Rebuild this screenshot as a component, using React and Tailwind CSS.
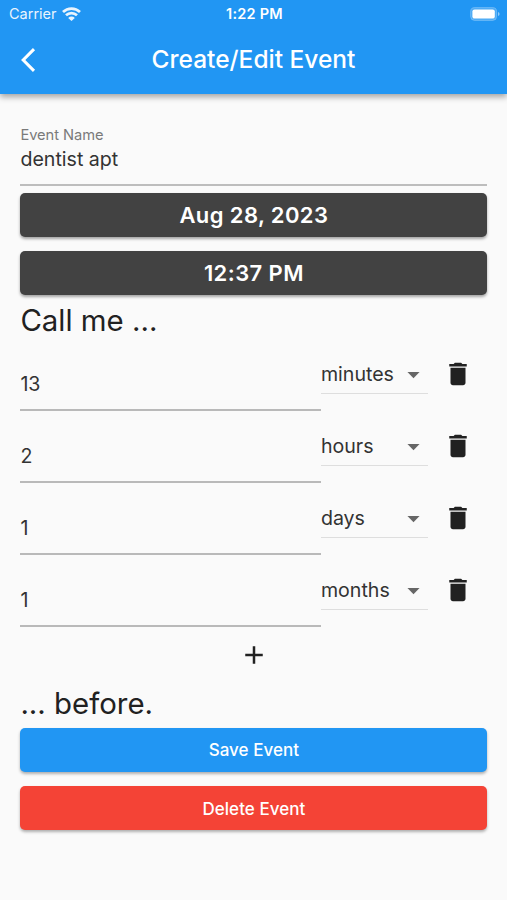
import React, { useState } from "react";

const initialReminders = [
    { id: 1, amount: "13", unit: "minutes" },
    { id: 2, amount: "2", unit: "hours" },
    { id: 3, amount: "1", unit: "days" },
    { id: 4, amount: "1", unit: "months" },
];

const StatusBar = () => (
    <div className="grid h-[27px] grid-cols-3 items-center pl-[9px] pr-[7px] text-[14.5px] leading-none">
        <div className="flex items-center gap-[5px] opacity-90">
            <span className="pt-px">Carrier</span>
            <svg className="h-[14px] w-[19px]" viewBox="0 0 19 14" fill="none" stroke="currentColor" strokeWidth="2.7">
                <path d="M1 5a12.2 12.2 0 0 1 17 0" />
                <path d="M4 8.3a7.9 7.9 0 0 1 11 0" />
                <path d="M6.2 10.9a4.6 4.6 0 0 1 6.6 0L9.5 14z" fill="currentColor" stroke="none" />
            </svg>
        </div>
        <span className="pt-[2px] text-center text-[14.5px] font-semibold tracking-[0.25px]">1:22 PM</span>
        <svg className="h-[14px] w-[30px] justify-self-end" viewBox="0 0 30 14">
            <rect x="0.6" y="0.6" width="26" height="12.8" rx="4" fill="white" fillOpacity="0.2" stroke="white" strokeOpacity="0.25" />
            <rect x="2.4" y="2.4" width="22.4" height="9.2" rx="2.2" fill="white" />
            <path d="M28 5v4q1.6-.6 1.6-2T28 5z" fill="white" fillOpacity="0.5" />
        </svg>
    </div>
);

const ReminderRow = ({ reminder, onChange, onDelete }) => (
    <div className="flex h-[72px] items-start">
        <input
            type="text"
            value={reminder.amount}
            onChange={(e) => onChange(reminder.id, e.target.value)}
            className="h-[72px] w-[300.5px] border-b-2 border-[#b9b9b9] bg-transparent pt-[21px] text-[19.6px] outline-none"
        />
        <div className="mt-[17px] flex h-[38px] w-[107px] items-center justify-between border-b border-[#dedede]">
            <span className="pt-px text-[19.6px]">{reminder.unit}</span>
            <svg className="h-[29px] w-[29px] text-[#666666]" fill="currentColor" viewBox="0 0 24 24">
                <path d="M7 10l5 5 5-5z" />
            </svg>
        </div>
        <button onClick={() => onDelete(reminder.id)} className="ml-[15px] mt-[20.5px]" aria-label="Delete">
            <svg className="h-[30px] w-[30px] text-[#212121]" fill="currentColor" viewBox="0 0 24 24">
                <path d="M6 19c0 1.1.9 2 2 2h8c1.1 0 2-.9 2-2V7H6v12zM19 4h-3.5l-1-1h-5l-1 1H5v2h14V4z" />
            </svg>
        </button>
    </div>
);

const App = () => {
    const [eventName, setEventName] = useState("dentist apt");
    const [reminders, setReminders] = useState(initialReminders);

    const handleChange = (id, amount) => {
        setReminders((prev) => prev.map((r) => (r.id === id ? { ...r, amount } : r)));
    };

    const handleDelete = (id) => {
        setReminders((prev) => prev.filter((r) => r.id !== id));
    };

    const handleAdd = () => {
        setReminders((prev) => [...prev, { id: Date.now(), amount: "1", unit: "minutes" }]);
    };

    return (
        <div className="min-h-[900px] w-[507px] bg-[#fafafa] font-['Inter',sans-serif] text-[#333333]">
            {/* App Bar */}
            <header className="h-[94px] bg-[#2196f3] text-white shadow-[0_3px_6px_rgba(0,0,0,0.35)]">
                <StatusBar />
                <div className="grid h-[65px] grid-cols-[60px_1fr_60px] items-center">
                    <button className="pl-[20.5px]" aria-label="Back">
                        <svg className="h-[24px] w-[15px]" fill="currentColor" viewBox="0 2 12.4 20">
                            <path d="M11.67 3.87L9.9 2.1 0 12l9.9 9.9 1.77-1.77L3.54 12z" />
                        </svg>
                    </button>
                    <h1 className="text-center text-[24.5px] font-medium leading-none">Create/Edit Event</h1>
                </div>
            </header>

            <main className="pl-[20.4px] pr-[19.6px] pt-[32px]">
                {/* Event Name */}
                <label className="block h-[60px] border-b-2 border-[#bdbdbd]">
                    <span className="block text-[14.7px] leading-[18px] tracking-[-0.05px] text-[#7a7a7a]">Event Name</span>
                    <input
                        type="text"
                        value={eventName}
                        onChange={(e) => setEventName(e.target.value)}
                        className="block h-[30px] w-full bg-transparent text-[19.6px] outline-none"
                    />
                </label>

                {/* Date and Time */}
                <div className="mt-[6.8px] flex flex-col gap-[14.5px] text-[22px] font-semibold tracking-[0.4px] text-white">
                    <button className="h-[44px] rounded-[5px] bg-[#424242] pt-px shadow-[0_2px_3px_rgba(0,0,0,0.35)]">Aug 28, 2023</button>
                    <button className="h-[44px] rounded-[5px] bg-[#424242] pt-px shadow-[0_2px_3px_rgba(0,0,0,0.35)]">12:37 PM</button>
                </div>

                {/* Reminders */}
                <h2 className="mt-[6.7px] h-[37px] text-[29.4px] leading-[37px] text-[#212121]">Call me ...</h2>
                <div>
                    {reminders.map((reminder) => (
                        <ReminderRow key={reminder.id} reminder={reminder} onChange={handleChange} onDelete={handleDelete} />
                    ))}
                </div>
                <div className="flex h-[58px] items-start justify-center pt-[13.5px]">
                    <button onClick={handleAdd} aria-label="Add">
                        <svg className="h-[30px] w-[30px] text-[#212121]" fill="currentColor" viewBox="0 0 24 24">
                            <path d="M19 13h-6v6h-2v-6H5v-2h6V5h2v6h6v2z" />
                        </svg>
                    </button>
                </div>
                <h2 className="h-[37px] text-[29.4px] leading-[37px] text-[#212121]">... before.</h2>

                {/* Actions */}
                <div className="mt-[6px] flex flex-col gap-[14.5px] text-[17px] font-medium tracking-[0.05px] text-white">
                    <button className="h-[44px] rounded-[5px] bg-[#2196f3] pt-px shadow-[0_2px_3px_rgba(0,0,0,0.3)]">Save Event</button>
                    <button className="h-[44px] rounded-[5px] bg-[#f44336] pt-[2px] shadow-[0_2px_3px_rgba(0,0,0,0.3)]">Delete Event</button>
                </div>
            </main>
        </div>
    );
};

export default App;
